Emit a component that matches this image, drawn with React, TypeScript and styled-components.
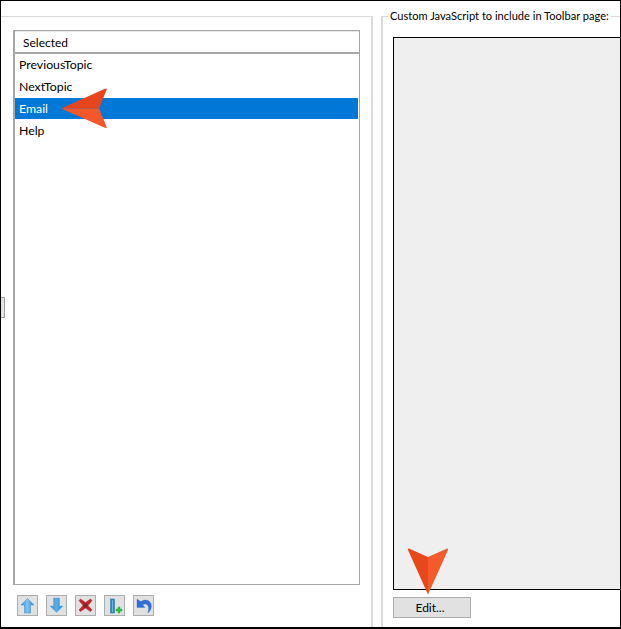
import React from "react";
import styled, { createGlobalStyle } from "styled-components";

const Global = createGlobalStyle`
  html, body { margin: 0; padding: 0; background: #fff; }
  body { font-family: "Lato", "Liberation Sans", sans-serif; font-size: 12px; color: #000; }
`;

const Frame = styled.div`
  position: relative;
  box-sizing: border-box;
  width: 621px;
  height: 629px;
  border: 1px solid #000;
  border-bottom-width: 2px;
  display: flex;
  overflow: hidden;
  background: #fff;
`;

const LeftPane = styled.section`
  box-sizing: border-box;
  width: 372px;
  margin-top: 15px;
  border-top: 1px solid #d9d9d9;
  border-right: 2px solid #dcdcdc;
  padding: 13px 10px 0 12px;
  display: flex;
  flex-direction: column;
`;

const ListBox = styled.div`
  box-sizing: border-box;
  width: 347px;
  height: 555px;
  border: 1px solid #a6a6a6;
  border-left-width: 2px;
  display: flex;
  flex-direction: column;
`;

const ListHeader = styled.div`
  box-sizing: border-box;
  height: 23px;
  padding-left: 8px;
  border-top: 1px solid #e9e9e9;
  border-bottom: 2px solid #a6a6a6;
  display: flex;
  align-items: center;
  font-size: 12px;
`;

const Row = styled.div<{ $selected?: boolean }>`
  box-sizing: border-box;
  height: ${(p) => (p.$selected ? "21px" : "22px")};
  margin-bottom: ${(p) => (p.$selected ? "1px" : "0")};
  width: 343px;
  padding-left: 4px;
  padding-bottom: ${(p) => (p.$selected ? "0" : "1px")};
  display: flex;
  align-items: center;
  font-size: 12.3px;
  background: ${(p) => (p.$selected ? "#0078d7" : "transparent")};
  color: ${(p) => (p.$selected ? "#fff" : "#000")};
`;

const Toolbar = styled.div`
  display: flex;
  gap: 8px;
  padding: 10px 0 0 4px;
`;

const IconButton = styled.button`
  box-sizing: border-box;
  width: 21px;
  height: 21px;
  padding: 0;
  border: 1px solid #adadad;
  background: #e1e1e1;
  display: flex;
  align-items: center;
  justify-content: center;
`;

const Group = styled.fieldset`
  box-sizing: border-box;
  flex: 1;
  min-width: 0;
  margin: 7px 0 0 8px;
  padding: 13px 0 0 10px;
  border: 0;
  border-top: 1px solid #d9d9d9;
  border-left: 2px solid #dcdcdc;
  display: flex;
  flex-direction: column;
`;

const GroupTitle = styled.legend`
  margin-left: -5px;
  padding: 0 2px 0 2px;
  font-size: 11.08px;
  line-height: 16px;
  white-space: nowrap;
`;

const ScriptBox = styled.div`
  box-sizing: border-box;
  height: 553px;
  background: #efefef;
  border: 1px solid #000;
  border-right: 0;
`;

const EditButton = styled.button`
  box-sizing: border-box;
  width: 78px;
  height: 21px;
  margin-top: 7px;
  padding: 0 4px 0 0;
  border: 1px solid #adadad;
  background: #e1e1e1;
  font: inherit;
  font-size: 12px;
  color: #000;
`;

const Grip = styled.div`
  position: absolute;
  left: 0;
  top: 296px;
  width: 4px;
  height: 21px;
  box-sizing: border-box;
  background: #e4e4e4;
  border: 1px solid #a0a0a0;
  border-left: 0;
`;

const Callout = styled.svg`
  position: absolute;
  overflow: visible;
  pointer-events: none;
`;

const LeftCallout = styled(Callout)`
  left: 59px;
  top: 86px;
`;

const DownCallout = styled(Callout)`
  left: 406px;
  top: 546px;
`;

const UpIcon = () => (
  <svg width="17" height="17" viewBox="0 0 17 17">
    <defs>
      <linearGradient id="u" x1="0" x2="1">
        <stop offset="0" stopColor="#2f8fdc" />
        <stop offset="0.5" stopColor="#7cc6f4" />
        <stop offset="1" stopColor="#1f7fd0" />
      </linearGradient>
    </defs>
    <path d="M8.5 1.5 L15 8 H11.5 V16 H5.5 V8 H2 Z" fill="url(#u)" stroke="#3a8fd0" strokeWidth="0.5" />
  </svg>
);

const DownIcon = () => (
  <svg width="17" height="17" viewBox="0 0 17 17">
    <defs>
      <linearGradient id="d" x1="0" x2="1">
        <stop offset="0" stopColor="#2f8fdc" />
        <stop offset="0.5" stopColor="#5aaee8" />
        <stop offset="1" stopColor="#1f7fd0" />
      </linearGradient>
    </defs>
    <path d="M5.5 1 H11.5 V9 H15 L8.5 15.5 L2 9 H5.5 Z" fill="url(#d)" stroke="#5aa9e6" strokeWidth="0.5" />
  </svg>
);

const DeleteIcon = () => (
  <svg width="17" height="17" viewBox="0 0 17 17">
    <path d="M3.5 2 L8.5 5.5 L13.5 2 L15 3.5 L11 8.5 L15 13 L13.5 14.5 L8.5 11 L3.5 14.5 L2 13 L6 8.5 L2 3.5 Z" fill="#c2272d" stroke="#a81e24" strokeWidth="0.5" />
    <path d="M6.5 6.5 H10.5 V10.5 H6.5 Z" fill="#8f1f24" />
  </svg>
);

const AddColumnIcon = () => (
  <svg width="19" height="19" viewBox="0 0 19 19">
    <rect x="5.5" y="3" width="4" height="14" fill="#2f86ba" stroke="#1f6f9e" strokeWidth="0.5" />
    <rect x="7" y="4" width="1" height="12" fill="#6db8dd" />
    <path d="M13 11 H15 V13 H17 V15 H15 V17 H13 V15 H11 V13 H13 Z" fill="#2fc03a" stroke="#1ea02a" strokeWidth="0.4" />
  </svg>
);

const UndoIcon = () => (
  <svg width="19" height="19" viewBox="0 0 19 19">
    <path d="M3 3 L3 11.5 L11 11.5 L8.6 8.8 C10.5 7.4 13 8 14 9.8 C15 11.8 14.6 14.5 13.8 17 C16.6 14.8 18 11.4 17.2 8.4 C16 3.8 10.8 2.8 6.6 5.6 Z" fill="#2f6fd6" stroke="#2a62c0" strokeWidth="0.3" />
  </svg>
);

export default function App() {
  return (
    <>
      <Global />
      <Frame>
        <LeftPane>
          <ListBox>
            <ListHeader>Selected</ListHeader>
            <Row>PreviousTopic</Row>
            <Row>NextTopic</Row>
            <Row $selected>Email</Row>
            <Row>Help</Row>
          </ListBox>
          <Toolbar>
            <IconButton><UpIcon /></IconButton>
            <IconButton><DownIcon /></IconButton>
            <IconButton><DeleteIcon /></IconButton>
            <IconButton><AddColumnIcon /></IconButton>
            <IconButton><UndoIcon /></IconButton>
          </Toolbar>
        </LeftPane>
        <Group>
          <GroupTitle>Custom JavaScript to include in Toolbar page:</GroupTitle>
          <ScriptBox />
          <EditButton>Edit...</EditButton>
        </Group>
        <Grip />
        <LeftCallout width="48" height="42" viewBox="0 0 48 42">
          <path d="M1 21.5 L45.5 1.5 Q47.5 1 46.5 3 L39 21.5 Z" fill="#e8451f" />
          <path d="M1 21.5 L39 21.5 L46.5 39.5 Q47.5 41.5 45.5 41 Z" fill="#f4572a" />
        </LeftCallout>
        <DownCallout width="42" height="48" viewBox="0 0 42 48">
          <path d="M21 47.5 L1 3 Q0.5 1 2.5 1.7 L21 10 Z" fill="#e8471c" />
          <path d="M21 47.5 L41 3 Q41.5 1 39.5 1.7 L21 10 Z" fill="#f45a2a" />
        </DownCallout>
      </Frame>
    </>
  );
}
